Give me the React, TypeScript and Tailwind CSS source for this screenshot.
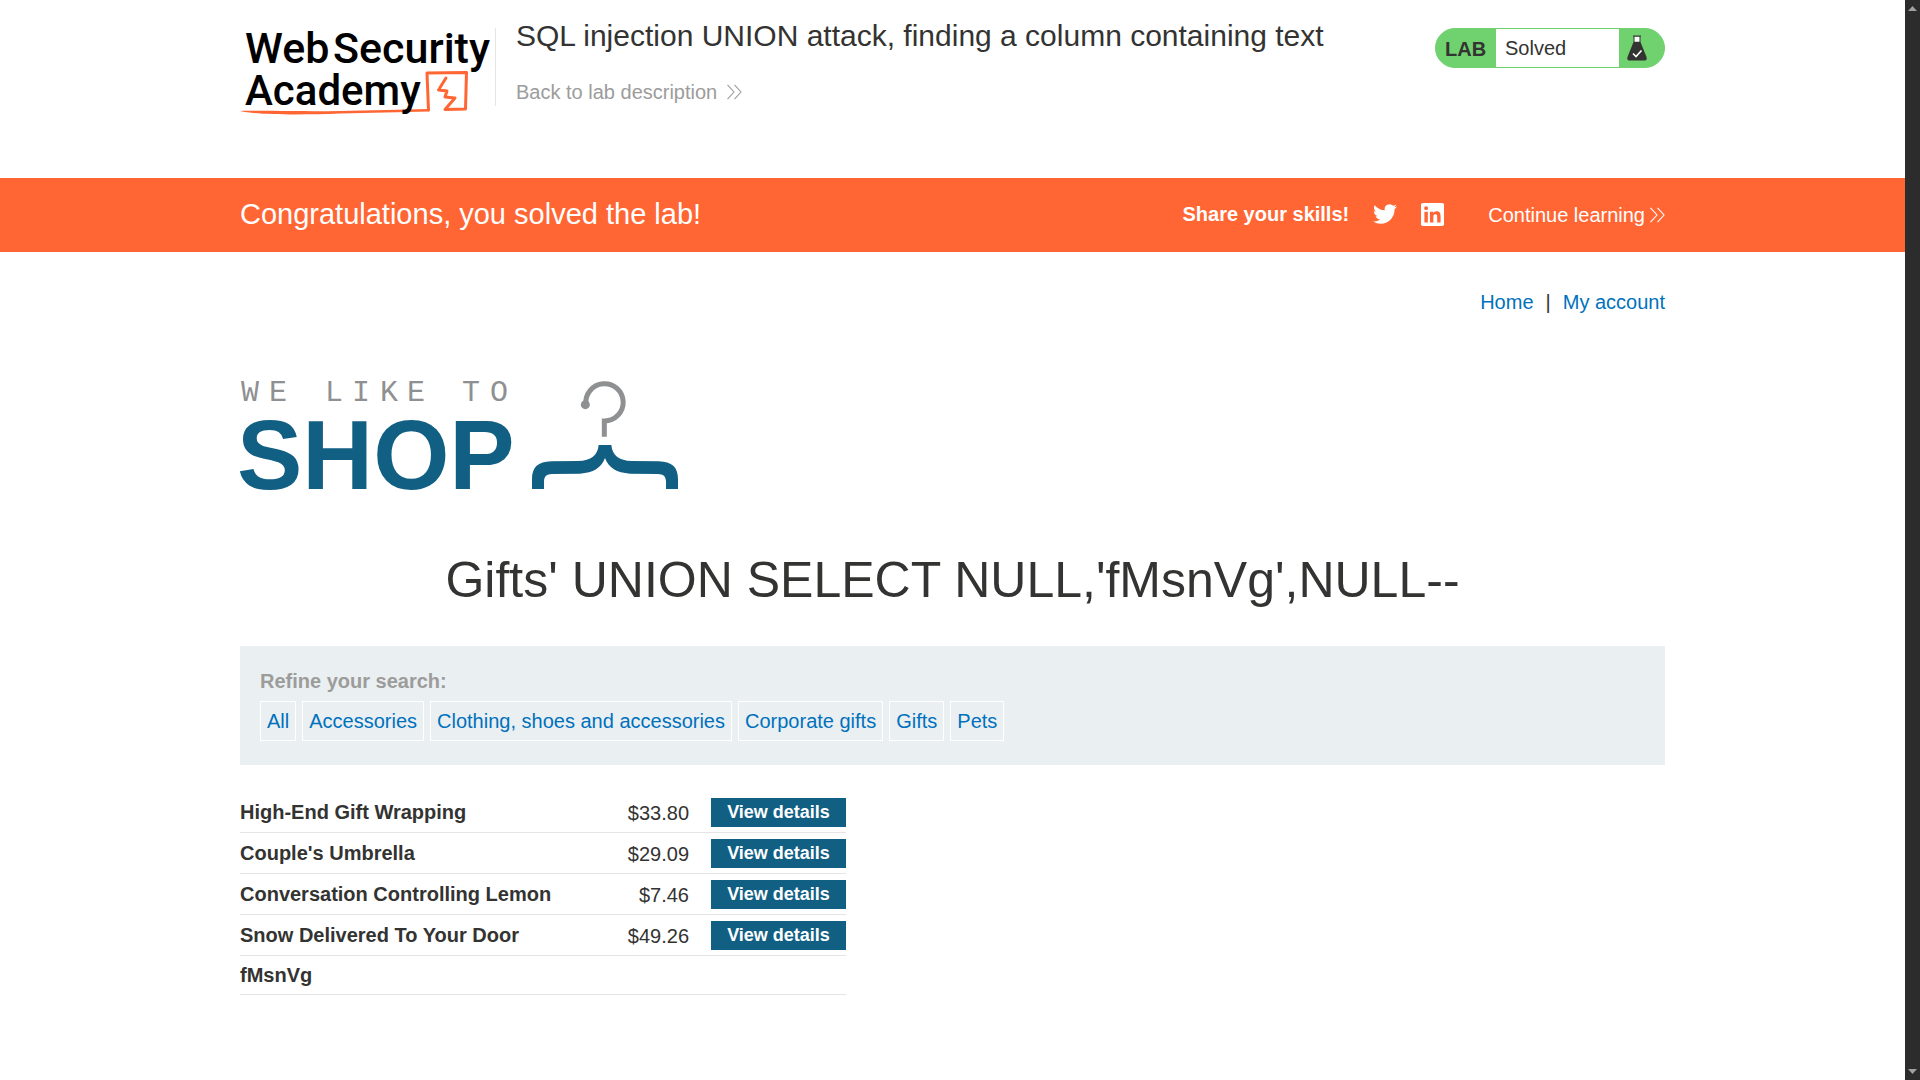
import React from "react";

const filters = ["All", "Accessories", "Clothing, shoes and accessories", "Corporate gifts", "Gifts", "Pets"];

const products = [
  { name: "High-End Gift Wrapping", price: "$33.80" },
  { name: "Couple's Umbrella", price: "$29.09" },
  { name: "Conversation Controlling Lemon", price: "$7.46" },
  { name: "Snow Delivered To Your Door", price: "$49.26" },
  { name: "fMsnVg", price: null },
];

function Chevrons() {
  return (
    <svg width="15" height="16" viewBox="0 0 15 16" fill="none" stroke="currentColor" strokeWidth="1.1" aria-hidden="true">
      <path d="M0.5 0.8 7 8 0.5 15.2M7.5 0.8 14 8 7.5 15.2" />
    </svg>
  );
}

function AcademyLogo() {
  return (
    <svg width="256" height="100" viewBox="240 20 256 100" role="img" aria-label="Web Security Academy">
      <g fill="none" stroke="#ff6633" strokeLinejoin="round" strokeLinecap="round">
        <path d="M428.500 110 427 73 466.500 72.500 465.500 109 445 109.500 455 98 445 97 447 91 438.500 90 446 78" strokeWidth="3" />
      </g>
      <path d="M240 111C260 110.500 300 111.600 340 111 372 110.500 400 109.500 429 109L429 111.500C400 112 370 113 340 113.500 300 115 258 115 240 111Z" fill="#ff6633" />
      <g fontFamily="Roboto, sans-serif" fontWeight="500" fill="#000">
        <text x="245" y="63" fontSize="43">Web</text>
        <text x="333" y="63" fontSize="43">Security</text>
        <text x="245" y="105" fontSize="42">Academy</text>
      </g>
    </svg>
  );
}

function ShopLogo() {
  return (
    <svg className="-ml-1" width="444" height="142" viewBox="236 370 444 142" role="img" aria-label="We like to shop">
      <text
        x="250 278 334 361 389 416 471 499"
        y="401"
        textAnchor="middle"
        fontFamily="'Liberation Mono', monospace"
        fontSize="30"
        fill="#8f9092"
      >
        WELIKETO
      </text>
      <text x="237" y="489" fontFamily="'Liberation Sans', sans-serif" fontWeight="700" fontSize="98" fill="#125f84">
        SHOP
      </text>
      <g transform="translate(230 370) scale(0.33333)">
        <path d="M1068 104A56 56 0 1 1 1123 153L1123 200" fill="none" stroke="#8f9092" strokeWidth="15" />
        <circle cx="1066" cy="104" r="13.500" fill="#8f9092" />
        <path
          d="M1106 225H1144C1147 256 1166 272 1206 273L1286 274C1326 275 1344 292 1344 328V357H1308V334C1307 318 1300 313 1284 312L1200 311C1160 308 1136 294 1125 264C1114 294 1090 308 1050 311L966 312C950 313 943 318 942 334V357H906V328C906 292 924 275 964 274L1044 273C1084 272 1103 256 1106 225Z"
          fill="#125f84"
        />
      </g>
    </svg>
  );
}

function Flask() {
  return (
    <svg width="20" height="26" viewBox="0 0 20 26" aria-hidden="true">
      <path d="M6.500 1V7L0.500 22Q-0.500 25.500 3 25.500H17Q20.500 25.500 19.500 22L13.500 7V1Z" fill="#333332" />
      <path d="M7.500 1.500h5v5.300h-5Z" fill="#fff" />
      <path d="M6 1H14" stroke="#333332" strokeWidth="1" />
      <path d="m6 18.500 3 3 5.500-6" fill="none" stroke="#fff" strokeWidth="1.600" />
    </svg>
  );
}

function LabStatus() {
  return (
    <div className="flex h-10 w-[230px] items-stretch overflow-hidden rounded-full border border-[#70d26e] bg-[#70d26e]">
      <span className="flex w-[60px] items-center pt-0.5 pl-[9px] font-bold">LAB</span>
      <span className="flex flex-1 items-center bg-white pl-[9px]">Solved</span>
      <span className="flex w-[45px] items-center pl-2">
        <Flask />
      </span>
    </div>
  );
}

function Scrollbar() {
  return (
    <div className="sticky top-0 flex h-screen w-[15px] shrink-0 flex-col items-center justify-between bg-[#2c2c2c] py-1.5" aria-hidden="true">
      <svg width="9" height="5" viewBox="0 0 9 5">
        <path d="M0 5 4.500 0 9 5Z" fill="#a0a0a0" />
      </svg>
      <svg width="9" height="5" viewBox="0 0 9 5">
        <path d="M0 0 4.500 5 9 0Z" fill="#a0a0a0" />
      </svg>
    </div>
  );
}

export default function App() {
  return (
    <div className="flex min-h-screen bg-white font-['Liberation_Sans',sans-serif] text-[20px] leading-6 text-[#333332]">
      <div className="min-w-0 flex-1">
        <header className="flex items-start px-60 pt-5 pb-[58px]">
          <AcademyLogo />
          <div className="ml-[-1px] flex flex-1 items-start pt-2">
            <div className="h-[78px] w-px bg-[#e5e5e5]" />
            <div className="-mt-2 ml-5">
              <h1 className="text-[30px] leading-8">SQL injection UNION attack, finding a column containing text</h1>
              <a href="#description" className="mt-7 flex items-center gap-2.5 text-[#9c9c9b]">
                Back to lab description
                <Chevrons />
              </a>
            </div>
          </div>
          <div className="pt-2">
            <LabStatus />
          </div>
        </header>

        <section className="flex h-[74px] items-center bg-[#ff6633] px-60 pb-0.5 text-white">
          <h2 className="flex-1 text-[29px] leading-8">Congratulations, you solved the lab!</h2>
          <span className="font-bold">Share your skills!</span>
          <a href="#twitter" aria-label="Share on Twitter" className="ml-6">
            <svg width="24" height="24" viewBox="0 0 24 24" fill="currentColor">
              <path d="M23.953 4.570a10 10 0 0 1-2.825.775 4.958 4.958 0 0 0 2.163-2.723 9.990 9.990 0 0 1-3.127 1.184 4.920 4.920 0 0 0-8.384 4.482C7.690 8.095 4.067 6.130 1.640 3.162a4.822 4.822 0 0 0-.666 2.475c0 1.710.870 3.213 2.188 4.096a4.904 4.904 0 0 1-2.228-.616v.060a4.923 4.923 0 0 0 3.946 4.827 4.996 4.996 0 0 1-2.212.085 4.936 4.936 0 0 0 4.604 3.417 9.867 9.867 0 0 1-6.102 2.105c-.390 0-.779-.023-1.170-.067a13.995 13.995 0 0 0 7.557 2.209c9.053 0 13.998-7.496 13.998-13.985 0-.210 0-.420-.015-.630A9.935 9.935 0 0 0 24 4.590z" />
            </svg>
          </a>
          <a href="#linkedin" aria-label="Share on LinkedIn" className="ml-6">
            <svg width="23" height="23" viewBox="0 0 24 24" fill="currentColor">
              <path d="M20.447 20.452h-3.554v-5.569c0-1.328-.027-3.037-1.852-3.037-1.853 0-2.136 1.445-2.136 2.939v5.667H9.351V9h3.414v1.561h.046c.477-.900 1.637-1.850 3.370-1.850 3.601 0 4.267 2.370 4.267 5.455v6.286zM5.337 7.433a2.062 2.062 0 0 1-2.063-2.065 2.064 2.064 0 1 1 2.063 2.065zm1.782 13.019H3.555V9h3.564v11.452zM22.225 0H1.771C.792 0 0 .774 0 1.729v20.542C0 23.227.792 24 1.771 24h20.451C23.200 24 24 23.227 24 22.271V1.729C24 .774 23.200 0 22.222 0h.003z" />
            </svg>
          </a>
          <a href="#learning" className="ml-11 flex items-center gap-[5px] pt-0.5">
            Continue learning
            <Chevrons />
          </a>
        </section>

        <main className="px-60">
          <nav className="flex justify-end gap-3 pt-[38px] text-[#0071bc]">
            <a href="#home">Home</a>
            <span className="text-[#333332]">|</span>
            <a href="#account">My account</a>
          </nav>

          <div className="pt-14">
            <ShopLogo />
          </div>

          <h1 className="mt-[38px] text-center text-[50px] leading-[60px]">Gifts' UNION SELECT NULL,'fMsnVg',NULL--</h1>

          <section className="mt-9 bg-[#eaeff2] px-5 pt-[23px] pb-6">
            <h2 className="font-bold text-[#9c9c9b]">Refine your search:</h2>
            <div className="mt-2 flex flex-wrap gap-1.5 text-[#0071bc]">
              {filters.map((f) => (
                <a key={f} href="#filter" className="flex h-10 items-center border border-white px-1.5">
                  {f}
                </a>
              ))}
            </div>
          </section>

          <table className="mt-[27px] w-[606px] border-separate border-spacing-0 [&_td]:border-b [&_td]:border-[#e4e4e4] [&_th]:border-b [&_th]:border-[#e4e4e4]">
            <tbody>
              {products.map((p) => (
                <tr key={p.name} className={p.price ? "h-[41px]" : "h-[39px]"}>
                  <th scope="row" className="text-left align-middle font-bold">{p.name}</th>
                  <td className="pt-0.5 pr-[22px] text-right align-middle">{p.price}</td>
                  <td className="w-[135px] pt-1.5 align-top">
                    {p.price && (
                      <a href="#product" className="block h-[29px] bg-[#125f84] text-center text-[18px] leading-7 font-bold text-white">
                        View details
                      </a>
                    )}
                  </td>
                </tr>
              ))}
            </tbody>
          </table>
        </main>
      </div>
      <Scrollbar />
    </div>
  );
}
